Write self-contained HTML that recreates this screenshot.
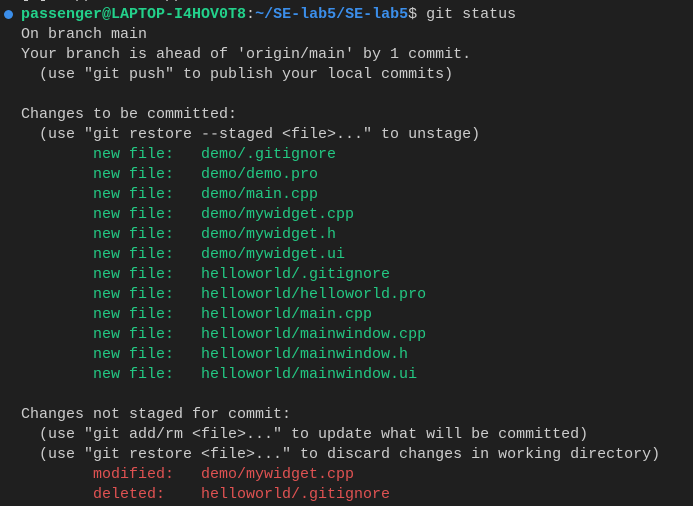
<!DOCTYPE html>
<html><head><style>
body{margin:0;background:#1f1f1f;width:693px;height:506px;overflow:hidden;position:relative}
pre{margin:0;position:absolute;left:21px;top:-15px;font-family:"Liberation Mono",monospace;font-size:15px;line-height:20px;color:#cccccc}
.g{color:#23c883}.b{color:#3b8eea}.pb{color:#23d18b;font-weight:bold}.r{color:#e05252}
.dot{position:absolute;left:4px;top:10px;width:9px;height:9px;border-radius:50%;background:#3b8eea}
</style></head><body>
<div class="dot"></div>
<pre>[ ]  applied   appl
<span class="pb">passenger@LAPTOP-I4HOV0T8</span>:<span class="b" style="font-weight:bold">~/SE-lab5/SE-lab5</span>$ git status
On branch main
Your branch is ahead of 'origin/main' by 1 commit.
  (use "git push" to publish your local commits)

Changes to be committed:
  (use "git restore --staged &lt;file&gt;..." to unstage)
<span class="g">        new file:   demo/.gitignore
        new file:   demo/demo.pro
        new file:   demo/main.cpp
        new file:   demo/mywidget.cpp
        new file:   demo/mywidget.h
        new file:   demo/mywidget.ui
        new file:   helloworld/.gitignore
        new file:   helloworld/helloworld.pro
        new file:   helloworld/main.cpp
        new file:   helloworld/mainwindow.cpp
        new file:   helloworld/mainwindow.h
        new file:   helloworld/mainwindow.ui</span>

Changes not staged for commit:
  (use "git add/rm &lt;file&gt;..." to update what will be committed)
  (use "git restore &lt;file&gt;..." to discard changes in working directory)
<span class="r">        modified:   demo/mywidget.cpp
        deleted:    helloworld/.gitignore</span>
</pre>
</body></html>
